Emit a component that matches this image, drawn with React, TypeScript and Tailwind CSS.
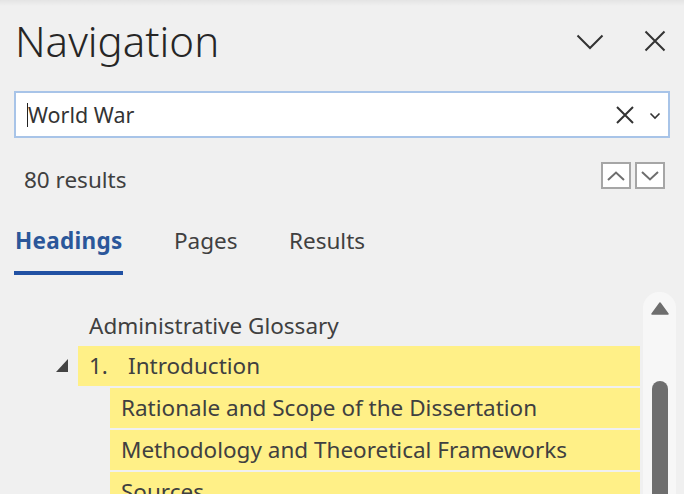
import React from "react";

const FONT = { fontFamily: '"Noto Sans", "Open Sans", "Liberation Sans", sans-serif' };

function Row({ indent, children }: { indent: number; children: React.ReactNode }) {
  return (
    <div className="flex h-[40px] items-stretch" style={{ paddingLeft: indent }}>
      <div className="flex flex-1 items-center bg-[#fff087] pl-[11px] text-[22.5px] leading-[30px] text-[#404040]">{children}</div>
    </div>
  );
}

export default function App() {
  return (
    <div className="relative h-[494px] w-[684px] overflow-hidden bg-[#f0f0f0]" style={FONT}>
      <div className="pointer-events-none absolute left-0 right-0 top-0 h-[6px] bg-gradient-to-b from-[#e4e4e4] to-[#f0f0f0]" />
      {/* header */}
      <div className="flex h-[86px] items-center justify-between pl-[15px] pr-[18px] pb-[4px]">
        <div className="text-[42px] font-light leading-none text-[#262626]">Navigation</div>
        <div className="flex items-center gap-[40px]">
          <svg width="28" height="16" viewBox="0 0 28 16" className="mt-[2px]">
            <path d="M1.5 1.5 L14 14 L26.5 1.5" fill="none" stroke="#333" strokeWidth="2" />
          </svg>
          <svg width="22" height="22" viewBox="0 0 22 22">
            <path d="M1.5 1.5 L20.5 20.5 M20.5 1.5 L1.5 20.5" fill="none" stroke="#333" strokeWidth="2" />
          </svg>
        </div>
      </div>
      {/* search */}
      <div className="mx-[14px] mt-[5px] flex h-[47px] items-center border-2 border-[#a8c4e8] bg-white pl-[11px] pr-[7px]">
        <div className="h-[24px] w-[1px] bg-[#222]" />
        <div className="flex-1 text-[21.5px] leading-[30px] text-[#333]">World War</div>
        <svg width="18" height="18" viewBox="0 0 18 18">
          <path d="M1 1 L17 17 M17 1 L1 17" fill="none" stroke="#333" strokeWidth="2" />
        </svg>
        <svg width="12" height="8" viewBox="0 0 12 8" className="ml-[15px] mt-[3px]">
          <path d="M1.5 1.5 L6 6 L10.5 1.5" fill="none" stroke="#333" strokeWidth="1.6" />
        </svg>
      </div>
      {/* results */}
      <div className="flex items-start justify-between pl-[24px] pr-[19px] pt-[27px]">
        <div className="text-[22.5px] leading-[30px] text-[#404040]">80 results</div>
        <div className="mt-[-3px] flex gap-[4px]">
          <div className="flex h-[27px] w-[30px] items-center justify-center border-2 border-[#a6a6a6] bg-white">
            <svg width="18" height="10" viewBox="0 0 18 10">
              <path d="M1 9 L9 1.5 L17 9" fill="none" stroke="#6e6e6e" strokeWidth="2" />
            </svg>
          </div>
          <div className="flex h-[27px] w-[30px] items-center justify-center border-2 border-[#a6a6a6] bg-white">
            <svg width="18" height="10" viewBox="0 0 18 10">
              <path d="M1 1 L9 8.5 L17 1" fill="none" stroke="#6e6e6e" strokeWidth="2" />
            </svg>
          </div>
        </div>
      </div>
      {/* tabs */}
      <div className="mt-[31px] flex pl-[14px] text-[22.5px] leading-[30px]">
        <div className="flex w-[109px] flex-col">
          <div className="pl-[1px] font-bold tracking-[0.3px] text-[#2b579a]">Headings</div>
          <div className="mt-[15px] h-[4px] w-[109px] bg-[#2151a3]" />
        </div>
        <div className="ml-[51px] w-[115px] text-[#404040]">Pages</div>
        <div className="text-[#404040]">Results</div>
      </div>
      {/* tree */}
      <div className="mt-[17px] flex">
        <div className="flex-1">
          <div className="h-[54px] pl-[89px] pt-[19px] text-[22.5px] leading-[30px] text-[#404040]">Administrative Glossary</div>
          <div className="relative">
            <svg width="12" height="13" viewBox="0 0 12 13" className="absolute left-[56px] top-[13px]">
              <path d="M12 0 L12 13 L0 13 Z" fill="#444" />
            </svg>
            <Row indent={78}>
              <span className="w-[39px]">1.</span>
              <span>Introduction</span>
            </Row>
          </div>
          <div className="mt-[2px] flex flex-col gap-[2px]">
            <Row indent={110}>Rationale and Scope of the Dissertation</Row>
            <Row indent={110}>Methodology and Theoretical Frameworks</Row>
            <Row indent={110}>Sources</Row>
          </div>
        </div>
        <div className="ml-[3px] mr-[8px] flex w-[33px] flex-col items-center rounded-t-[16px] bg-[#f7f7f7]">
          <svg width="18" height="13" viewBox="0 0 18 13" className="mt-[10px]">
            <path d="M9 1 L17 12 L1 12 Z" fill="#6e6e6e" stroke="#6e6e6e" strokeWidth="1.5" strokeLinejoin="round" />
          </svg>
          <div className="mt-[66px] h-[200px] w-[16px] rounded-t-[8px] bg-[#6e6e6e]" />
        </div>
      </div>
    </div>
  );
}
